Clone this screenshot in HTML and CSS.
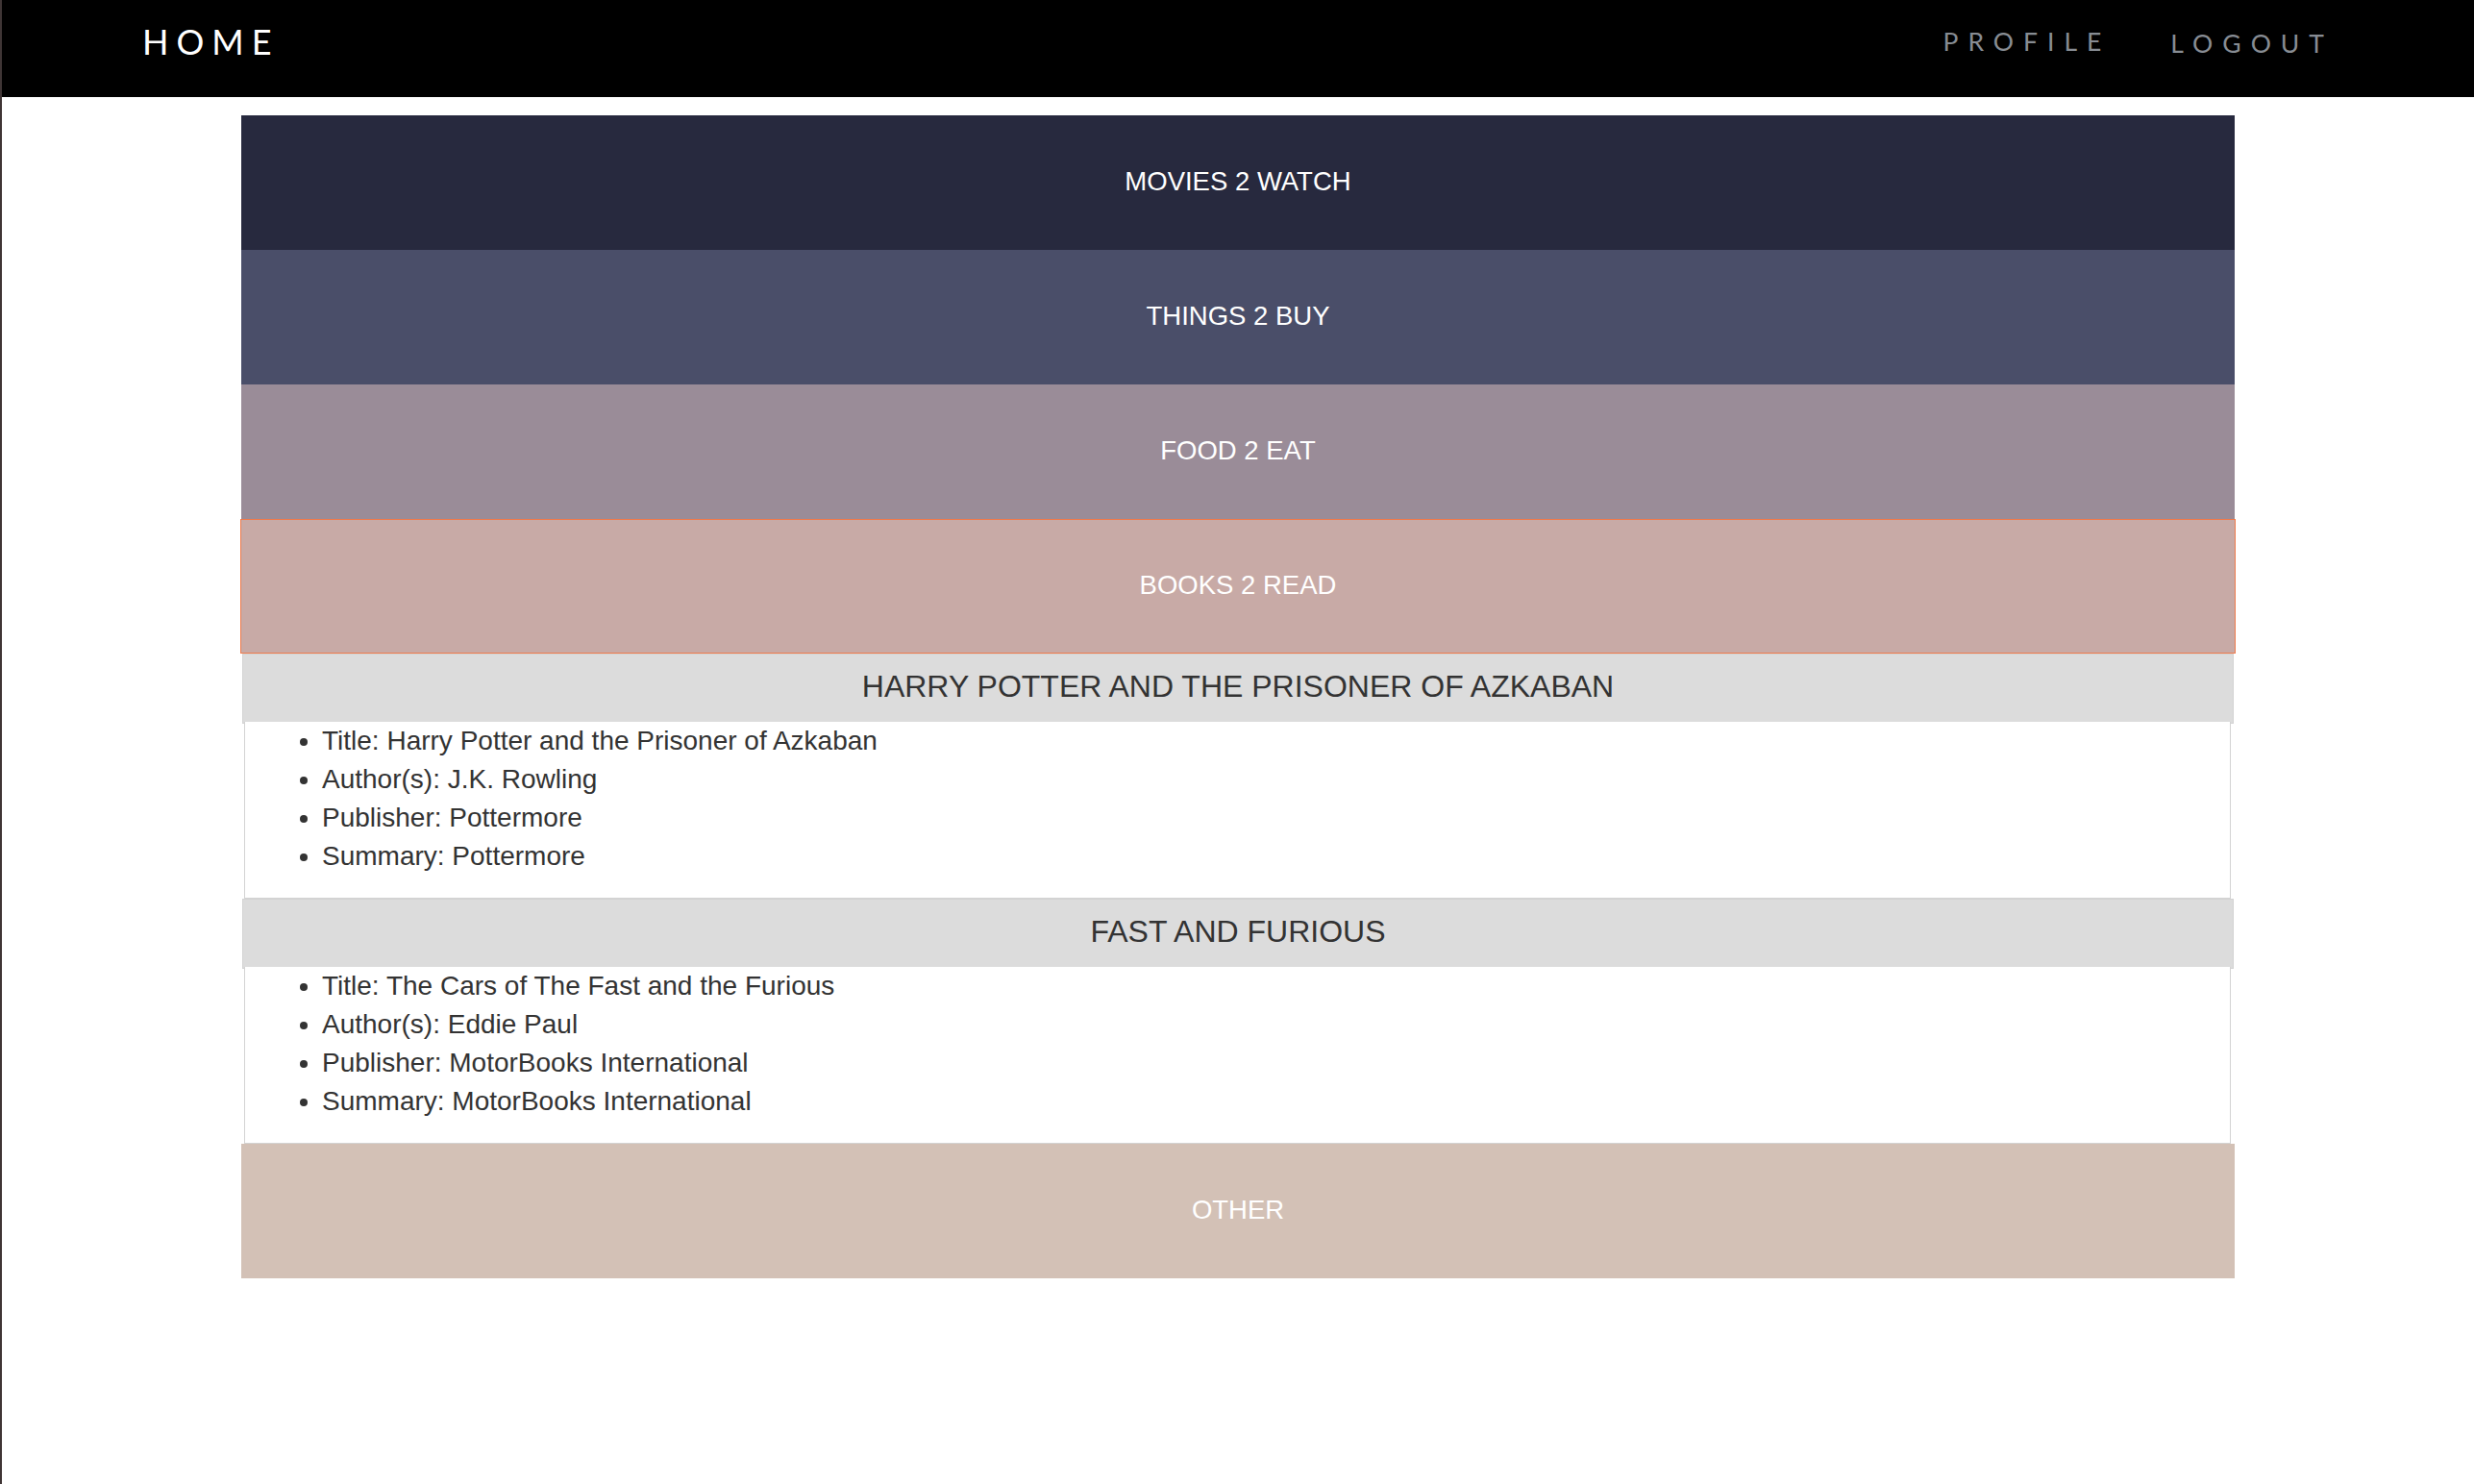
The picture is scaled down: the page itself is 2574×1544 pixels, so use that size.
FILE: index.html
```html
<!DOCTYPE html>
<html lang="en">
<head>
<meta charset="utf-8">
<title>Home</title>
<link rel="stylesheet" href="styles.css">
</head>
<body>
<nav class="topbar">
  <a class="brand" href="#">HOME</a>
  <div class="links">
    <a class="link link-profile" href="#">PROFILE</a>
    <a class="link link-logout" href="#">LOGOUT</a>
  </div>
</nav>
<main class="lists">
  <div class="bar bar-movies">MOVIES 2 WATCH</div>
  <div class="bar bar-things">THINGS 2 BUY</div>
  <div class="bar bar-food">FOOD 2 EAT</div>
  <div class="bar bar-books">BOOKS 2 READ</div>
  <section class="item">
    <div class="item-head">HARRY POTTER AND THE PRISONER OF AZKABAN</div>
    <div class="item-body">
      <ul class="details">
        <li>Title: Harry Potter and the Prisoner of Azkaban</li>
        <li>Author(s): J.K. Rowling</li>
        <li>Publisher: Pottermore</li>
        <li>Summary: Pottermore</li>
      </ul>
    </div>
  </section>
  <section class="item">
    <div class="item-head">FAST AND FURIOUS</div>
    <div class="item-body">
      <ul class="details">
        <li>Title: The Cars of The Fast and the Furious</li>
        <li>Author(s): Eddie Paul</li>
        <li>Publisher: MotorBooks International</li>
        <li>Summary: MotorBooks International</li>
      </ul>
    </div>
  </section>
  <div class="bar bar-other">OTHER</div>
</main>
</body>
</html>
```
FILE: styles.css
```css
html, body {
  margin: 0;
  padding: 0;
}
body {
  min-height: 100vh;
  box-sizing: border-box;
  border-left: 2px solid #3f3535;
  background: #ffffff;
  font-family: "Liberation Sans", Arial, sans-serif;
}
.topbar {
  height: 101px;
  background: #000000;
  display: flex;
  justify-content: space-between;
  align-items: flex-start;
  padding: 0 146px 0 146px;
}
.brand {
  margin-top: 25px;
  font-family: Lato, "Liberation Sans", sans-serif;
  font-size: 36px;
  line-height: 36px;
  letter-spacing: 8px;
  color: #ffffff;
  text-decoration: none;
}
.links {
  display: flex;
  align-items: flex-start;
  gap: 62px;
}
.link {
  font-family: Lato, "Liberation Sans", sans-serif;
  font-size: 26.5px;
  line-height: 26.5px;
  letter-spacing: 10px;
  color: #878c93;
  text-decoration: none;
}
.link-profile {
  margin-top: 30px;
}
.link-logout {
  margin-top: 32px;
}
.lists {
  width: 2074px;
  margin: 19px auto 0;
}
.bar {
  height: 140px;
  box-sizing: border-box;
  display: flex;
  align-items: center;
  justify-content: center;
  padding-bottom: 3px;
  color: #ffffff;
  font-size: 27.5px;
}
.bar-movies { background: #27293e; }
.bar-things { background: #4a4e69; }
.bar-food { background: #9a8c98; }
.bar-books {
  background: #c8aaa6;
  border: 1px solid #ef7a4c;
  margin: 0 -1px;
}
.bar-other { background: #d3c1b6; }
.item-head {
  height: 73px;
  box-sizing: border-box;
  margin: 0 1px;
  border: 1px solid #d3d3d3;
  background: #dcdcdc;
  display: flex;
  align-items: center;
  justify-content: center;
  padding-bottom: 4px;
  color: #333333;
  font-size: 32px;
}
.item-body {
  margin: 0 4px 0 3px;
  border: 1px solid #d3d3d3;
  border-top: none;
  background: #ffffff;
}
.details {
  margin: -2px 0 23px;
  padding-left: 80px;
  font-size: 28px;
  line-height: 40px;
  color: #333333;
}
```
